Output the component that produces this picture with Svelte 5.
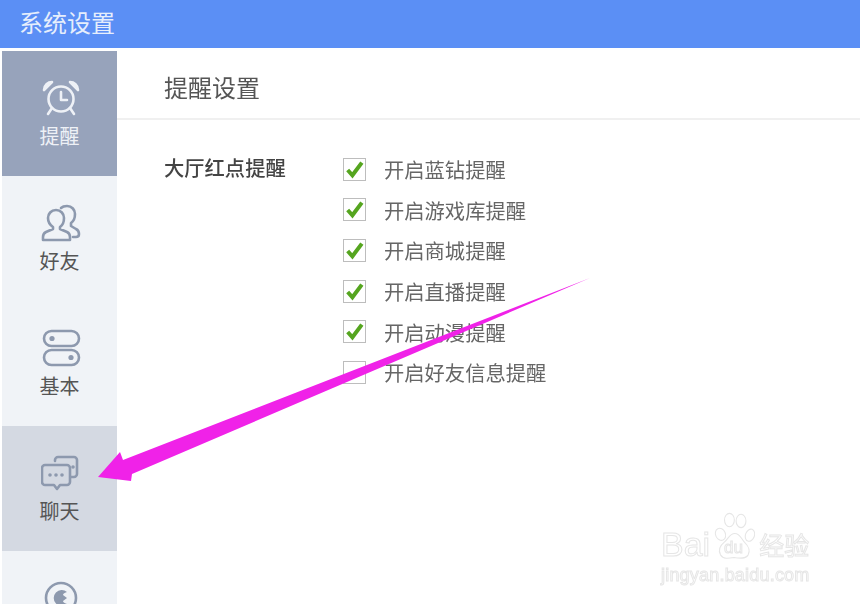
<script>
  const nav = [
    { id: 'alarm', label: '提醒', state: 'active' },
    { id: 'friends', label: '好友', state: '' },
    { id: 'basic', label: '基本', state: '' },
    { id: 'chat', label: '聊天', state: 'hover' },
    { id: 'other', label: '', state: '' }
  ];

  const options = [
    { label: '开启蓝钻提醒', checked: true },
    { label: '开启游戏库提醒', checked: true },
    { label: '开启商城提醒', checked: true },
    { label: '开启直播提醒', checked: true },
    { label: '开启动漫提醒', checked: true },
    { label: '开启好友信息提醒', checked: false }
  ];
</script>

<div class="window">
  <header class="titlebar">系统设置</header>

  <div class="body">
    <nav class="sidebar">
      {#each nav as item}
        <div class="nav-item {item.state}">
          <svg class="nav-icon" viewBox="0 0 40 40" fill="none" stroke="currentColor" stroke-width="2.6" stroke-linecap="round" stroke-linejoin="round">
            {#if item.id === 'alarm'}
              <circle cx="20" cy="21" r="12.5" />
              <path d="M20 14v8h6" />
              <path d="M11 30l-4 6M29 30l4 6" />
              <path d="M3 12c0-5 4-8 8-8l-8 8zM37 12c0-5-4-8-8-8l8 8z" fill="currentColor" />
            {:else if item.id === 'friends'}
              <path d="M15 7c-5 0-8 4-8 8 0 4 2 7 5 9v2l-7 3c-2 1-3 3-3 5v3h27v-3c0-2-1-4-3-5l-7-3v-2c3-2 4-5 4-9 0-4-3-8-8-8z" />
              <path d="M20 5c2-2 4-2 6-2 5 0 8 4 8 8 0 4-1 7-4 9v3l5 3c2 1 3 3 3 5 0 2-1 3-3 3h-3" />
            {:else if item.id === 'basic'}
              <rect x="3" y="3" width="35" height="15" rx="7.5" />
              <rect x="3" y="22" width="35" height="15" rx="7.5" />
              <circle cx="11" cy="10.5" r="2.6" fill="currentColor" stroke="none" />
              <circle cx="30" cy="29.5" r="2.6" fill="currentColor" stroke="none" />
            {:else if item.id === 'chat'}
              <path d="M4 12h22c1.5 0 3 1.5 3 3v14c0 1.5-1.5 3-3 3h-7l-3 4-3-4H4c-1.5 0-3-1.5-3-3V15c0-1.5 1.5-3 3-3z" />
              <path d="M14 8V7c0-1.5 1.5-3 3-3h16c1.5 0 3 1.5 3 3v14c0 1.5-1.5 3-3 3h-3" />
              <circle cx="9" cy="22" r="1.8" fill="currentColor" stroke="none" />
              <circle cx="15" cy="22" r="1.8" fill="currentColor" stroke="none" />
              <circle cx="21" cy="22" r="1.8" fill="currentColor" stroke="none" />
              <circle cx="32" cy="14" r="1.8" fill="currentColor" stroke="none" />
            {:else}
              <circle cx="20" cy="20" r="15" />
              <path d="M26 14a8 8 0 1 0 0 12c-3-1-4-2-4-3l4-3-4-3c0-1 1-2 4-3z" fill="currentColor" stroke="none" />
            {/if}
          </svg>
          {#if item.label}<span class="nav-label">{item.label}</span>{/if}
        </div>
      {/each}
    </nav>

    <main class="content">
      <h1 class="page-title">提醒设置</h1>
      <section class="group">
        <h2 class="group-title">大厅红点提醒</h2>
        <ul class="options">
          {#each options as opt}
            <li class="option">
              <span class="box">
                {#if opt.checked}
                  <svg viewBox="0 0 20 20" width="21" height="21">
                    <path d="M3.5 10.5L8 15.5L17 3.5" fill="none" stroke="#55a51f" stroke-width="3.8" />
                  </svg>
                {/if}
              </span>
              <span>{opt.label}</span>
            </li>
          {/each}
        </ul>
      </section>
    </main>
  </div>

  <svg class="arrow" viewBox="0 0 860 604" width="860" height="604">
    <path d="M98 477L120 452L123 460L590 278L132 474L131 481Z" fill="#f022e8" />
  </svg>

  <div class="watermark">
    <div class="wm-top">
      <span class="wm-bai">Bai</span>
      <svg class="paw" viewBox="0 0 44 56" fill="none" stroke="#e6e6e6" stroke-width="1.2">
        <ellipse cx="8" cy="25" rx="5.5" ry="7" transform="rotate(-25 8 25)" />
        <ellipse cx="18" cy="9" rx="5.5" ry="7.5" />
        <ellipse cx="31" cy="10" rx="5.5" ry="7.5" />
        <ellipse cx="41" cy="26" rx="5" ry="7" transform="rotate(20 41 26)" />
        <path d="M24 24c-6 0-7 6-12 10-5 4-7 8-4 14 3 5 9 4 15 3 6 1 13 2 16-3 3-6 0-10-4-14-4-4-5-10-11-10z" />
      </svg>
      <span class="wm-du">du</span>
      <span class="wm-jy">经验</span>
    </div>
    <div class="wm-url">jingyan.baidu.com</div>
  </div>
</div>

<style>
  :global(body) {
    margin: 0;
    background: #fff;
  }
  .window {
    position: relative;
    width: 860px;
    height: 604px;
    overflow: hidden;
    font-family: "Noto Sans CJK SC", "Liberation Sans", sans-serif;
    color: #555;
    filter: blur(0.6px);
  }
  .titlebar {
    height: 48px;
    padding-left: 19px;
    background: #5b8ff5;
    color: #e6eefc;
    font-size: 24px;
    line-height: 43px;
  }
  .body {
    display: flex;
    height: 556px;
  }
  .sidebar {
    flex: none;
    width: 115px;
    margin: 3px 0 0 2px;
    background: #f0f3f7;
  }
  .nav-item {
    height: 125px;
    box-sizing: border-box;
    padding-top: 27px;
    display: flex;
    flex-direction: column;
    align-items: center;
    color: #8d99ae;
  }
  .nav-item.active {
    background: #97a3bb;
    color: #eef1f6;
  }
  .nav-item.hover {
    background: #d4d9e2;
  }
  .nav-icon {
    width: 40px;
    height: 40px;
    margin-right: -2px;
  }
  .nav-label {
    margin-top: 5px;
    font-size: 20px;
    line-height: 26px;
    color: #555;
  }
  .active .nav-label {
    color: #eef1f6;
  }
  .content {
    flex: 1;
  }
  .page-title {
    margin: 0;
    height: 72px;
    box-sizing: border-box;
    padding-left: 47px;
    border-bottom: 2px solid #f0f0f0;
    font-size: 24px;
    font-weight: 400;
    line-height: 78px;
    color: #555;
  }
  .group {
    display: flex;
    padding: 30px 0 0 47px;
  }
  .group-title {
    flex: none;
    width: 179px;
    margin: 0;
    font-size: 20.3px;
    font-weight: 500;
    line-height: 34px;
    color: #444;
  }
  .options {
    list-style: none;
    margin: -1px 0 0;
    padding: 0;
  }
  .option {
    display: flex;
    align-items: center;
    height: 40.6px;
    font-size: 20.3px;
    color: #666;
  }
  .box {
    width: 21px;
    height: 21px;
    margin-right: 18px;
    border: 1.5px solid #bdbdbd;
    background: #fff;
  }
  .box svg {
    display: block;
  }
  .arrow {
    position: absolute;
    left: 0;
    top: 0;
    pointer-events: none;
  }
  .watermark {
    position: absolute;
    left: 661px;
    top: 510px;
    width: 160px;
    color: transparent;
    -webkit-text-stroke: 1px #e6e6e6;
    font-family: "Liberation Sans", sans-serif;
  }
  .wm-top {
    display: flex;
    align-items: flex-end;
    height: 52px;
  }
  .wm-bai {
    font-size: 34px;
    line-height: 36px;
  }
  .paw {
    width: 44px;
    height: 50px;
    flex: none;
    margin-left: 1px;
  }
  .wm-du {
    position: absolute;
    left: 63px;
    top: 28px;
    font-size: 17px;
  }
  .wm-jy {
    margin-left: 4px;
    font-size: 25px;
    line-height: 36px;
    font-family: "Noto Sans CJK SC", sans-serif;
  }
  .wm-url {
    font-size: 18px;
    letter-spacing: 0.2px;
    white-space: nowrap;
    line-height: 26px;
  }
</style>
